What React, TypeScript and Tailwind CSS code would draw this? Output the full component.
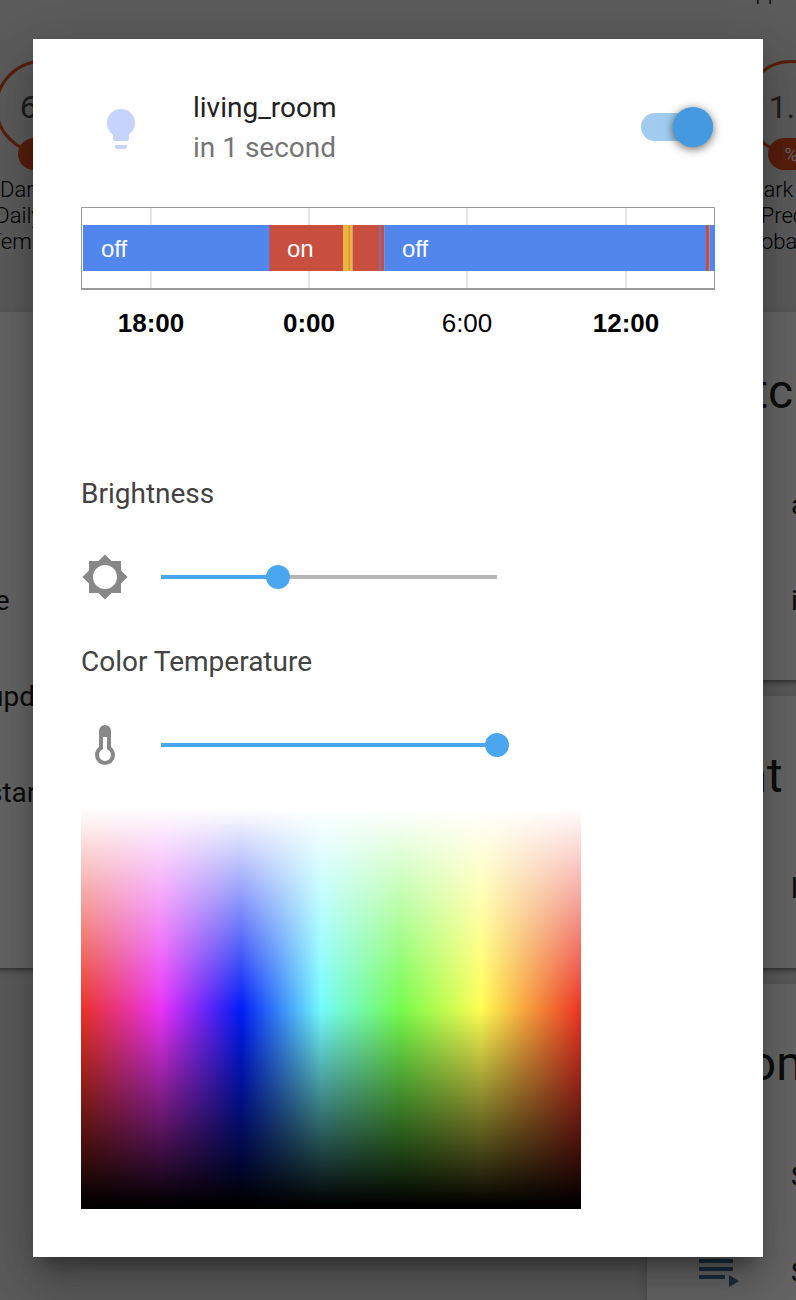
import { useState } from "react";
import type { ReactNode } from "react";

const icons = {
  bulb: "M12,2A7,7 0 0,0 5,9C5,11.38 6.19,13.47 8,14.74V17A1,1 0 0,0 9,18H15A1,1 0 0,0 16,17V14.74C17.81,13.47 19,11.38 19,9A7,7 0 0,0 12,2M9,21A1,1 0 0,0 10,22H14A1,1 0 0,0 15,21V20H9V21Z",
  brightness:
    "M12,18A6,6 0 0,1 6,12A6,6 0 0,1 12,6A6,6 0 0,1 18,12A6,6 0 0,1 12,18M20,15.31L23.31,12L20,8.69V4H15.31L12,0.69L8.69,4H4V8.69L0.69,12L4,15.31V20H8.69L12,23.31L15.31,20H20V15.31Z",
  thermometer:
    "M17,17A5,5 0 0,1 12,22A5,5 0 0,1 7,17C7,15.36 7.79,13.91 9,13V5A3,3 0 0,1 12,2A3,3 0 0,1 15,5V13C16.21,13.91 17,15.36 17,17M11,8V14.17C9.83,14.58 9,15.69 9,17A3,3 0 0,0 12,20A3,3 0 0,0 15,17C15,15.69 14.17,14.58 13,14.17V8H11Z",
  playlist: "M19,9H2V11H19V9M19,5H2V7H19V5M2,15H15V13H2V15M17,13V19L22,16L17,13Z",
};

function Icon({ path, className }: { path: string; className: string }) {
  return (
    <svg viewBox="0 0 24 24" aria-hidden="true" className={`size-12 shrink-0 fill-current ${className}`}>
      <path d={path} />
    </svg>
  );
}

function Badge({ value, unit, lines }: { value: string; unit: string; lines: string[] }) {
  return (
    <div className="flex w-[94px] flex-col items-center">
      <div className="flex size-[94px] items-center justify-center rounded-full border-[3px] border-[#df4c1e] text-[32px] leading-none text-[#4c4c4c]">
        {value}
      </div>
      <div className="-mt-4 flex h-8 min-w-11 items-center justify-center rounded-full bg-[#df4c1e] px-4 text-[18px] text-white">
        {unit}
      </div>
      <div className="mt-[7px] text-center text-[22px] leading-[26px] font-light whitespace-nowrap">
        {lines.map((line) => (
          <div key={line}>{line}</div>
        ))}
      </div>
    </div>
  );
}

function Card({ title, children }: { title?: string; children: ReactNode }) {
  return (
    <section className="bg-white pb-8 shadow-[0_4px_4px_rgba(0,0,0,0.14),0_2px_10px_rgba(0,0,0,0.12),0_6px_2px_-4px_rgba(0,0,0,0.2)]">
      <h2 className="flex h-36 items-center pt-4 pl-[29px] text-[48px]">{title}</h2>
      {children}
    </section>
  );
}

function Row({ label, icon }: { label: string; icon?: string }) {
  return (
    <div className="flex h-24 items-center gap-12 pt-0.5 pl-12">
      {icon ? <Icon path={icon} className="text-[#44739e]" /> : <span className="w-12 shrink-0" />}
      <span>{label}</span>
    </div>
  );
}

function Dashboard() {
  return (
    <div className="absolute inset-0 overflow-hidden bg-[#e5e5e5] text-[28px] whitespace-nowrap text-[#212121]">
      <div className="flex h-[312px] flex-col text-black">
        <div className="flex h-[60px] justify-end pr-4">
          <span className="-mt-5 text-[22px] leading-6 font-light">App</span>
        </div>
        <div className="-mr-[42px] -ml-[5px] flex justify-between">
          <Badge value="6.4" unit="°F" lines={["Dark Sky", "Daily Max", "Temperat…"]} />
          <Badge value="1.0" unit="%" lines={["Dark Sky", "Precip", "Probability"]} />
        </div>
      </div>
      <div className="-mx-4 flex items-start gap-4">
        <div className="min-w-0 flex-1">
          <Card>
            <div className="ml-1 pt-[97px] pb-[95px] leading-[96px]">
              <div>le</div>
              <div>update</div>
              <div>start</div>
            </div>
          </Card>
        </div>
        <div className="flex w-[165px] shrink-0 flex-col gap-4">
          <Card title="Switch">
            <Row label="a" />
            <Row label="i" />
          </Card>
          <Card title="Light">
            <Row label="l" />
          </Card>
          <Card title="Automation">
            <Row label="S" icon={icons.playlist} />
            <Row label="S" icon={icons.playlist} />
          </Card>
        </div>
      </div>
    </div>
  );
}

const segments = [
  { x: 2, w: 187, color: "#5186ec" },
  { x: 188.5, w: 74, color: "#c84e40" },
  { x: 262, w: 9.5, color: "#ecb53f" },
  { x: 267.5, w: 1.2, color: "#d68a3f" },
  { x: 271.5, w: 32, color: "#c84e40" },
  { x: 298, w: 2, color: "#7e70a4" },
  { x: 303.3, w: 322, color: "#5186ec" },
  { x: 625, w: 3.6, color: "#c3533f" },
  { x: 628.6, w: 5.4, color: "#5186ec" },
];

const ticks = [
  { x: 70, label: "18:00", bold: true },
  { x: 228, label: "0:00", bold: true },
  { x: 386, label: "6:00", bold: false },
  { x: 545, label: "12:00", bold: true },
];

const segmentLabels = [
  { x: 20, label: "off" },
  { x: 206, label: "on" },
  { x: 321, label: "off" },
];

function Timeline() {
  return (
    <svg
      viewBox="0 0 634 130"
      role="img"
      aria-label="State history"
      className="mt-10 block w-full font-['Liberation_Sans',Arial,sans-serif]"
    >
      {ticks.map((t) => (
        <rect key={t.label} x={t.x - 1} y="1" width="2" height="80" fill="#e6e6e6" />
      ))}
      <path d="M0.5 83V0.5H633.5V83" fill="none" stroke="#999" />
      <rect x="0" y="81" width="634" height="2" fill="#999" />
      {segments.map((s) => (
        <rect key={s.x} x={s.x} y="18" width={s.w} height="46" fill={s.color} />
      ))}
      {segmentLabels.map((s) => (
        <text key={s.x} x={s.x} y="50" fontSize="24" fill="#fff">
          {s.label}
        </text>
      ))}
      {ticks.map((t) => (
        <text key={t.label} x={t.x} y="125" fontSize="26" textAnchor="middle" fontWeight={t.bold ? 700 : 400}>
          {t.label}
        </text>
      ))}
    </svg>
  );
}

function SliderControl({
  id,
  label,
  icon,
  initial,
  max,
  className,
}: {
  id: string;
  label: string;
  icon: string;
  initial: number;
  max: number;
  className: string;
}) {
  const [value, setValue] = useState(initial);
  const percent = (value / max) * 100;
  return (
    <div className={className}>
      <label htmlFor={id} className="block text-[28px] leading-[42px] text-[#424242]">
        {label}
      </label>
      <div className="mt-[38px] flex items-center gap-5">
        <Icon path={icon} className="text-[#888]" />
        <input
          id={id}
          type="range"
          min={0}
          max={max}
          value={value}
          onChange={(e) => setValue(Number(e.target.value))}
          style={{ backgroundImage: `linear-gradient(to right, #4aa6ef ${percent}%, #b5b5b5 ${percent}%)` }}
          className="h-6 w-[360px] cursor-pointer appearance-none bg-[length:calc(100%-24px)_4px] bg-center bg-no-repeat [&::-webkit-slider-thumb]:size-6 [&::-webkit-slider-thumb]:appearance-none [&::-webkit-slider-thumb]:rounded-full [&::-webkit-slider-thumb]:bg-[#4aa6ef]"
        />
      </div>
    </div>
  );
}

export default function App() {
  const [on, setOn] = useState(true);
  return (
    <div className="relative min-h-screen font-[Roboto,sans-serif]">
      <Dashboard />
      <div className="relative min-h-screen overflow-hidden bg-black/60 px-[33px] pt-[39px] pb-[43px]">
        <div
          role="dialog"
          aria-labelledby="entity-name"
          className="bg-white p-12 shadow-[0_32px_48px_4px_rgba(0,0,0,0.14),0_12px_60px_10px_rgba(0,0,0,0.12),0_16px_20px_-10px_rgba(0,0,0,0.4)]"
        >
          <header className="flex h-20 items-center">
            <div className="flex h-20 w-20 items-center justify-center pt-1">
              <Icon path={icons.bulb} className="text-[#c5d3fd]" />
            </div>
            <div className="ml-8 flex-1 pt-0.5 text-[28px] leading-10">
              <label id="entity-name" htmlFor="power" className="block text-[#212121]">
                living_room
              </label>
              <div className="text-[#757575]">in 1 second</div>
            </div>
            <input
              id="power"
              type="checkbox"
              role="switch"
              checked={on}
              onChange={(e) => setOn(e.target.checked)}
              className="mr-0.5 flex h-7 w-[72px] cursor-pointer appearance-none items-center rounded-full bg-[#bdbdbd] before:size-10 before:shrink-0 before:rounded-full before:bg-[#fafafa] before:shadow-[0_2px_10px_rgba(0,0,0,0.6)] checked:justify-end checked:bg-[#a1ccef] checked:before:bg-[#4499e0]"
            />
          </header>
          <Timeline />
          <SliderControl
            id="brightness"
            label="Brightness"
            icon={icons.brightness}
            initial={89}
            max={255}
            className="mt-[136px]"
          />
          <SliderControl
            id="temperature"
            label="Color Temperature"
            icon={icons.thermometer}
            initial={500}
            max={500}
            className="mt-10"
          />
          <button
            type="button"
            aria-label="Color"
            className="mt-10 block h-[400px] w-[500px] max-w-full cursor-crosshair bg-[linear-gradient(to_bottom,#fff_0%,#fff0_50%,#0000_50%,#000_99%),linear-gradient(to_right,#eb3223_0%,#ea33f7_16%,#001bf6_32%,#74fbfd_48%,#75fb4c_64%,#fffe54_80%,#eb3223_100%)]"
          />
        </div>
      </div>
    </div>
  );
}
